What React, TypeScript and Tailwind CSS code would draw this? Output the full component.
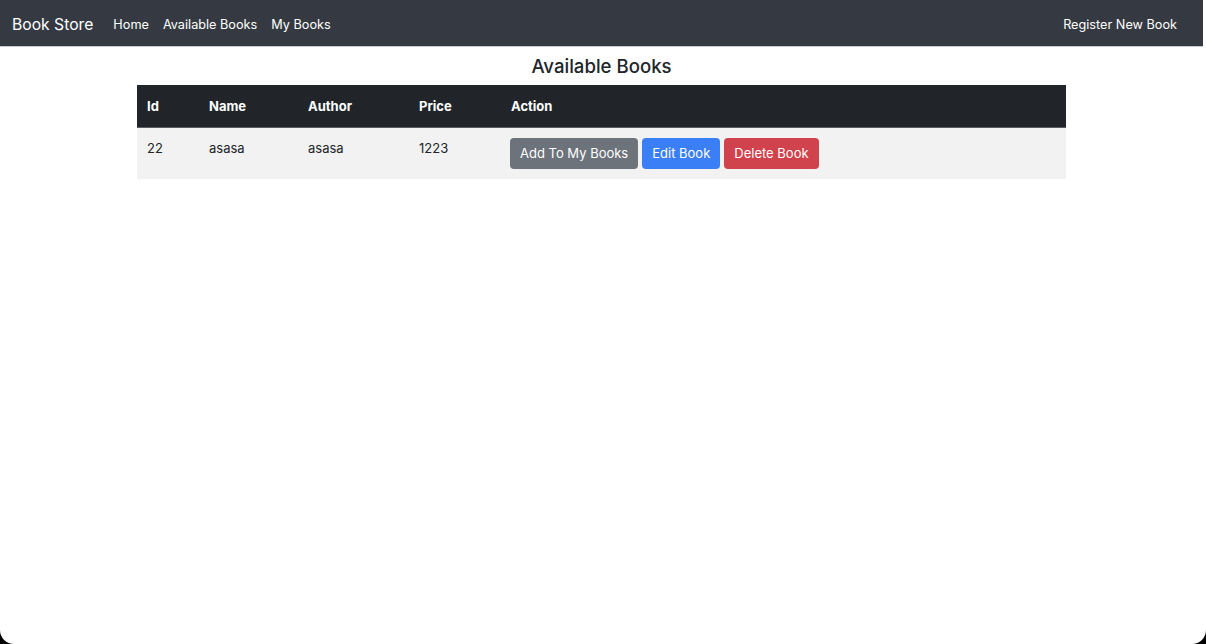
const books = [{ id: 22, name: "asasa", author: "asasa", price: 1223 }];

export default function App() {
  return (
    <div className="h-[644px] w-[1206px] overflow-hidden bg-black font-['Inter',sans-serif]">
      <div className="flex h-full flex-col rounded-b-[14px] bg-white">
        <nav className="mr-[3px] flex h-[47px] items-center border-b border-[#c9c9cc] bg-[#353a42] pt-[3px] pl-[12px] pr-[26px]">
          <span className="mr-[20px] text-[15.7px] text-white">Book Store</span>
          <div className="flex gap-[14px] text-[12.7px] text-white">
            <span>Home</span>
            <span>Available Books</span>
            <span>My Books</span>
          </div>
          <span className="ml-auto text-[12.7px] text-white">Register New Book</span>
        </nav>
        <div className="pr-[3px]">
          <div className="mx-auto w-[929px]">
            <h3 className="mt-[6px] mb-[6px] text-center text-[18.6px] font-medium leading-[26px] text-[#212529]">
              Available Books
            </h3>
            <table className="w-full border-collapse text-left text-[13px] text-[#212529]">
              <thead>
                <tr className="h-[42px] border-b border-[#5a5e63] bg-[#212529] text-white">
                  <th className="w-[62px] pt-[2px] pl-[10px] font-bold">Id</th>
                  <th className="w-[99px] pt-[2px] pl-[10px] font-bold">Name</th>
                  <th className="w-[111px] pt-[2px] pl-[10px] font-bold">Author</th>
                  <th className="w-[92px] pt-[2px] pl-[10px] font-bold">Price</th>
                  <th className="pt-[2px] pl-[10px] font-bold">Action</th>
                </tr>
              </thead>
              <tbody>
                {books.map((b) => (
                  <tr key={b.id} className="h-[52px] bg-[#f2f2f2]">
                    <td className="pt-[11px] pl-[10px] align-top">{b.id}</td>
                    <td className="pt-[11px] pl-[10px] align-top">{b.name}</td>
                    <td className="pt-[11px] pl-[10px] align-top">{b.author}</td>
                    <td className="pt-[11px] pl-[10px] align-top">{b.price}</td>
                    <td className="pt-[1px] pl-[9px] align-middle">
                      <div className="flex gap-[4px]">
                        <button className="h-[31px] rounded-[4px] bg-[#6c737b] px-[10px] text-[13px] text-white">
                          Add To My Books
                        </button>
                        <button className="h-[31px] rounded-[4px] bg-[#3a7ff6] px-[10px] text-[13px] text-white">
                          Edit Book
                        </button>
                        <button className="h-[31px] rounded-[4px] bg-[#d0434d] px-[10px] text-[13px] text-white">
                          Delete Book
                        </button>
                      </div>
                    </td>
                  </tr>
                ))}
              </tbody>
            </table>
          </div>
        </div>
      </div>
    </div>
  );
}
